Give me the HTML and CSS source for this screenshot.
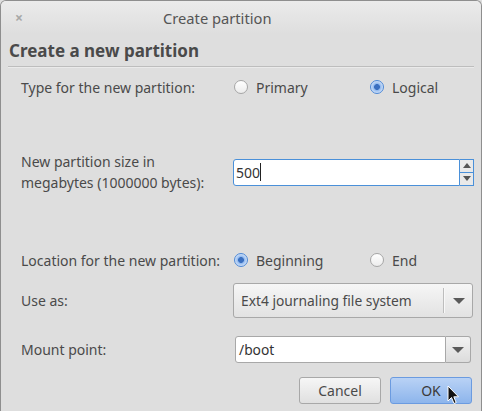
FILE: index.html
```html
<!DOCTYPE html>
<html>
<head>
<meta charset="utf-8">
<link rel="stylesheet" href="styles.css">
</head>
<body>
<div class="window">
  <div class="titlebar">
    <span class="close">×</span>
    <span class="title">Create partition</span>
  </div>
  <div class="heading">Create a new partition</div>
  <div class="separator"></div>
  <div class="form">
    <div class="row row-type">
      <div class="label">Type for the new partition:</div>
      <div class="radios">
        <label class="radio"><span class="dot"></span>Primary</label>
        <label class="radio checked"><span class="dot"></span>Logical</label>
      </div>
    </div>
    <div class="row row-size">
      <div class="label">New partition size in<br>megabytes (1000000 bytes):</div>
      <div class="spin">
        <div class="spin-entry"><span>500</span><span class="caret"></span></div>
        <div class="spin-btns">
          <div class="spin-btn"><span class="tri-up"></span></div>
          <div class="spin-btn"><span class="tri-down"></span></div>
        </div>
      </div>
    </div>
    <div class="row row-loc">
      <div class="label">Location for the new partition:</div>
      <div class="radios">
        <label class="radio checked"><span class="dot"></span>Beginning</label>
        <label class="radio"><span class="dot"></span>End</label>
      </div>
    </div>
    <div class="row row-use">
      <div class="label">Use as:</div>
      <div class="combo">
        <span class="combo-text">Ext4 journaling file system</span>
        <span class="combo-sep"></span>
        <span class="combo-arrow"><span class="tri-down big"></span></span>
      </div>
    </div>
    <div class="row row-mount">
      <div class="label">Mount point:</div>
      <div class="combo-entry">
        <div class="ce-entry">/boot</div>
        <div class="ce-btn"><span class="tri-down big"></span></div>
      </div>
    </div>
    <div class="actions">
      <div class="btn">Cancel</div>
      <div class="btn btn-ok">OK</div>
    </div>
  </div>
  <svg class="cursor" width="13" height="20" viewBox="0 0 13 20">
    <path d="M1 1 L1 16 L4.5 12.5 L7 18.5 L9.2 17.6 L6.8 11.8 L11.5 11.8 Z" fill="#111" stroke="#fff" stroke-width="1" stroke-linejoin="round"/>
  </svg>
</div>
</body>
</html>
```
FILE: styles.css
```css
html, body {
  margin: 0;
  padding: 0;
  background: #dedede;
}
body {
  font-family: "Noto Sans", "Open Sans", sans-serif;
  font-size: 14px;
  color: #4a4a4a;
}
.window {
  position: relative;
  width: 480px;
  height: 410px;
  border: 1px solid #8e8e8e;
  border-bottom: none;
  border-radius: 6px 6px 0 0;
  background: #dedede;
  overflow: hidden;
}
.titlebar {
  height: 33px;
  display: flex;
  align-items: center;
  background: linear-gradient(#ebebeb, #dedede);
}
.close {
  width: 12px;
  margin-left: 12px;
  color: #a8a8a8;
  font-size: 14px;
  font-weight: bold;
  line-height: 1;
  text-align: center;
}
.title {
  margin-left: 138px;
  color: #555;
  font-size: 14.7px;
}
.heading {
  margin: 3px 0 0 8px;
  height: 27px;
  font-size: 17px;
  font-weight: bold;
  color: #4a4a4a;
  line-height: 27px;
}
.separator {
  margin: 2px 7px 0 7px;
  height: 1px;
  background: #bdbdbd;
  border-bottom: 1px solid #eaeaea;
}
.form {
  padding: 0 9px 0 20px;
}
.row {
  display: grid;
  grid-template-columns: 211px 1fr;
  align-items: center;
}
.row-type { height: 38px; }
.row-size { height: 52px; margin-top: 40px; }
.row-loc { height: 22px; margin-top: 51px; }
.row-use { height: 35px; margin-top: 12px; }
.row-mount { height: 27px; margin-top: 18px; }
.label { line-height: 21px; }
.radios {
  display: grid;
  grid-template-columns: 136px 1fr;
  padding-left: 2px;
}
.radio {
  display: flex;
  align-items: center;
  gap: 8px;
}
.dot {
  box-sizing: border-box;
  width: 14px;
  height: 14px;
  border-radius: 50%;
  border: 1px solid #a6a6a6;
  background: linear-gradient(#ffffff, #ececec);
}
.radio.checked .dot {
  border-color: #4d88d6;
  background: radial-gradient(circle, #3a6fc0 0 2.6px, #8fb8ee 3.2px, #cfe0f8 6px);
}
.spin {
  display: flex;
  margin-left: 1px;
  height: 27px;
}
.spin-entry {
  box-sizing: border-box;
  width: 227px;
  height: 27px;
  background: #fff;
  border: 1px solid #4a90d9;
  border-radius: 3px 0 0 3px;
  display: flex;
  align-items: center;
  padding-left: 2px;
  font-size: 14px;
  color: #333;
}
.caret {
  width: 1px;
  height: 18px;
  background: #222;
}
.spin-btns {
  box-sizing: border-box;
  width: 14px;
  height: 27px;
  border: 1px solid #4a90d9;
  border-left: none;
  display: flex;
  flex-direction: column;
  background: #e9e9e9;
}
.spin-btn {
  flex: 1;
  display: flex;
  align-items: center;
  justify-content: center;
}
.spin-btn + .spin-btn { border-top: 1px solid #4a90d9; }
.tri-up, .tri-down {
  width: 0;
  height: 0;
  border-left: 4px solid transparent;
  border-right: 4px solid transparent;
}
.tri-up { border-bottom: 5px solid #555; }
.tri-down { border-top: 5px solid #555; }
.tri-down.big {
  border-left-width: 6px;
  border-right-width: 6px;
  border-top-width: 6px;
  border-top-color: #5a5a5a;
}
.combo {
  box-sizing: border-box;
  height: 35px;
  width: 240px;
  margin-left: 1px;
  border: 1px solid #a8a8a8;
  border-radius: 3px;
  background: linear-gradient(#f6f6f6, #e2e2e2);
  display: flex;
  align-items: center;
  font-size: 13.8px;
  color: #4a4a4a;
}
.combo-text { flex: 1; padding-left: 7px; }
.combo-sep {
  width: 1px;
  height: 25px;
  background: #bdbdbd;
  border-right: 1px solid #f8f8f8;
}
.combo-arrow {
  width: 27px;
  display: flex;
  justify-content: center;
}
.combo-entry {
  display: flex;
  height: 27px;
  margin-left: 3px;
  width: 236px;
}
.ce-entry {
  box-sizing: border-box;
  flex: 1;
  background: #fff;
  border: 1px solid #a8a8a8;
  border-radius: 3px 0 0 3px;
  padding-left: 3px;
  display: flex;
  align-items: center;
  font-size: 13.8px;
  color: #333;
}
.ce-btn {
  box-sizing: border-box;
  width: 25px;
  border: 1px solid #a8a8a8;
  border-left: none;
  border-radius: 0 3px 3px 0;
  background: linear-gradient(#f2f2f2, #dcdcdc);
  display: flex;
  align-items: center;
  justify-content: center;
}
.actions {
  display: flex;
  justify-content: flex-end;
  gap: 9px;
  margin-top: 14px;
}
.btn {
  box-sizing: border-box;
  width: 82px;
  height: 27px;
  border: 1px solid #a8a8a8;
  border-radius: 3px;
  background: linear-gradient(#f6f6f6, #e0e0e0);
  display: flex;
  align-items: center;
  justify-content: center;
  font-size: 14px;
  color: #4a4a4a;
}
.btn-ok {
  border-color: #6b9be0;
  background: linear-gradient(#b9d2f5, #8db5ec);
  color: #3a3a3a;
}
.cursor {
  position: absolute;
  left: 446px;
  top: 384px;
}
```
